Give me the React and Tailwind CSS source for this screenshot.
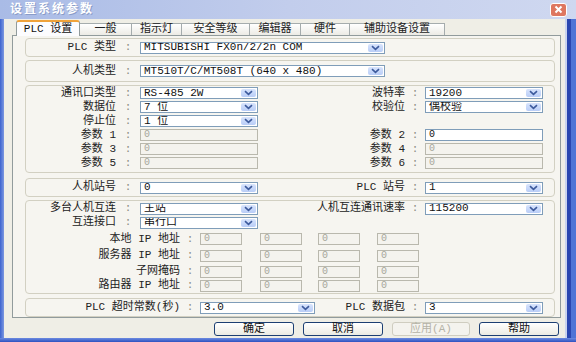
import React from "react"

const MONO = "font-['Liberation_Mono','Noto_Sans_CJK_SC',monospace]"

function Chevron() {
  return (
    <svg width="9" height="6" viewBox="0 0 9 6">
      <path d="M1 1.2 L4.5 4.4 L8 1.2" fill="none" stroke="#3d5a9c" strokeWidth="1.6" />
    </svg>
  )
}

function Select({ value, w }) {
  return (
    <div className={`flex h-[12px] items-stretch border border-[#7f9db9] bg-white ${w}`}>
      <div className="flex flex-1 items-center overflow-hidden whitespace-pre pl-[3px] text-[11px] leading-none text-[#111]">
        {value}
      </div>
      <div className="m-[1px] flex w-[15px] items-center justify-center rounded-[2px] bg-gradient-to-b from-[#d8e4fc] to-[#b9cdf7]">
        <Chevron />
      </div>
    </div>
  )
}

function Input({ value = "0", w, disabled = true }) {
  return (
    <div
      className={`flex h-[12px] items-center pl-[3px] text-[10px] leading-none ${w} ${
        disabled
          ? "border border-[#b9b8ad] bg-[#f4f3ee] text-[#a7a79c]"
          : "border border-[#7f9db9] bg-white text-[#111]"
      }`}
    >
      {value}
    </div>
  )
}

function Label({ text, w }) {
  return <div className={`whitespace-pre text-right text-[11px] leading-none text-[#222] ${w}`}>{text}</div>
}

function Colon({ w }) {
  return <div className={`text-center text-[11px] leading-none text-[#8a8a80] ${w}`}>:</div>
}

function Group({ className, children }) {
  return <div className={`mr-[5px] ml-[12px] rounded-[4px] border border-[#d2d0c2] ${className}`}>{children}</div>
}

// left column: label ends ~116, colon centred 128, control at 140
function LeftField({ label, children }) {
  return (
    <>
      <Label text={label} w="w-[90px]" />
      <Colon w="w-[24px]" />
      {children}
    </>
  )
}

function RightField({ label, children, w = "w-[147px]" }) {
  return (
    <>
      <Label text={label} w={w} />
      <Colon w="w-[20px]" />
      {children}
    </>
  )
}

function IpRow({ label, h }) {
  return (
    <div className={`flex items-center ${h}`}>
      <Label text={label} w="w-[154px]" />
      <Colon w="w-[20px]" />
      <Input w="w-[42px]" />
      <Input w="w-[42px] ml-[18px]" />
      <Input w="w-[42px] ml-[16px]" />
      <Input w="w-[42px] ml-[17px]" />
    </div>
  )
}

const tabs = [
  { name: "一般", w: "w-[52px]" },
  { name: "指示灯", w: "w-[50px]" },
  { name: "安全等级", w: "w-[68px]" },
  { name: "编辑器", w: "w-[51px]" },
  { name: "硬件", w: "w-[49px]" },
  { name: "辅助设备设置", w: "w-[95px]" },
]

function Button({ children, w, disabled }) {
  return (
    <div
      className={`flex h-[14px] items-center justify-center rounded-[3px] text-[11px] leading-none ${w} ${
        disabled
          ? "border border-[#cfcdc0] bg-[#f4f3ee] text-[#b4b2a6]"
          : "border border-[#1c3f73] bg-gradient-to-b from-white to-[#ecebe3] text-[#111]"
      }`}
    >
      {children}
    </div>
  )
}

export default function App() {
  return (
    <div className={`flex h-[342px] w-[576px] flex-col overflow-hidden bg-[#5b7ed8] ${MONO}`}>
      {/* title bar */}
      <div className="flex h-[19px] items-center bg-gradient-to-r from-[#a9bbe6] via-[#c2cdec] to-[#cfd8f0] pl-[10px] pr-[9px]">
        <div className="flex-1 text-[12px] font-bold tracking-[2px] text-white [text-shadow:1px_1px_0_#8a9cc8]">
          设置系统参数
        </div>
        <div className="flex h-[14px] w-[17px] items-center justify-center rounded-[3px] border border-white bg-[#de7760]">
          <svg width="9" height="9" viewBox="0 0 9 9">
            <path d="M1.5 1.5 L7.5 7.5 M7.5 1.5 L1.5 7.5" stroke="white" strokeWidth="2" />
          </svg>
        </div>
      </div>

      <div className="flex min-h-0 flex-1">
        <div className="w-[4px] bg-gradient-to-r from-[#3d63cf] to-[#7d98e0]" />
        <div className="flex flex-1 flex-col bg-[#efeee6] pt-[2px] pr-[4px] pl-[8px]">
          {/* tabs */}
          <div className="relative z-10 flex h-[14px] items-end pl-[4px] text-[11px] leading-none">
            <div className="mb-[-1px] flex h-[16px] w-[64px] items-center justify-center rounded-t-[3px] border-x border-t-2 border-x-[#919b9c] border-t-[#f0a33a] bg-[#fcfcfe] text-[#111]">
              PLC 设置
            </div>
            {tabs.map((t) => (
              <div
                key={t.name}
                className={`flex h-[12px] items-center justify-center border-t border-r border-[#a5acad] bg-gradient-to-b from-white to-[#ecebe5] text-[#222] ${t.w}`}
              >
                {t.name}
              </div>
            ))}
          </div>

          {/* panel */}
          <div className="flex h-[283px] flex-col border border-[#919b9c] bg-[#f6f5f0] pt-[2px]">
            <Group className="flex h-[19px] items-center">
              <LeftField label="PLC 类型">
                <Select value="MITSUBISHI FX0n/2/2n COM" w="w-[245px]" />
              </LeftField>
            </Group>

            <Group className="mt-[3px] flex h-[22px] items-center">
              <LeftField label="人机类型">
                <Select value="MT510T/C/MT508T (640 x 480)" w="w-[245px]" />
              </LeftField>
            </Group>

            <Group className="mt-[3px] flex h-[88px] flex-col pt-[0px]">
              <div className="flex h-[14px] items-center">
                <LeftField label="通讯口类型">
                  <Select value="RS-485 2W" w="w-[118px]" />
                </LeftField>
                <RightField label="波特率">
                  <Select value="19200" w="w-[118px]" />
                </RightField>
              </div>
              <div className="flex h-[14px] items-center">
                <LeftField label="数据位">
                  <Select value="7 位" w="w-[118px]" />
                </LeftField>
                <RightField label="校验位">
                  <Select value="偶校验" w="w-[118px]" />
                </RightField>
              </div>
              <div className="flex h-[14px] items-center">
                <LeftField label="停止位">
                  <Select value="1 位" w="w-[118px]" />
                </LeftField>
              </div>
              <div className="flex h-[14px] items-center">
                <LeftField label="参数 1">
                  <Input w="w-[118px]" />
                </LeftField>
                <RightField label="参数 2">
                  <Input w="w-[118px]" disabled={false} />
                </RightField>
              </div>
              <div className="flex h-[14px] items-center">
                <LeftField label="参数 3">
                  <Input w="w-[118px]" />
                </LeftField>
                <RightField label="参数 4">
                  <Input w="w-[118px]" />
                </RightField>
              </div>
              <div className="flex h-[14px] items-center">
                <LeftField label="参数 5">
                  <Input w="w-[118px]" />
                </LeftField>
                <RightField label="参数 6">
                  <Input w="w-[118px]" />
                </RightField>
              </div>
            </Group>

            <Group className="mt-[5px] flex h-[19px] items-center">
              <LeftField label="人机站号">
                <Select value="0" w="w-[118px]" />
              </LeftField>
              <RightField label="PLC 站号">
                <Select value="1" w="w-[118px]" />
              </RightField>
            </Group>

            <Group className="mt-[3px] flex h-[94px] flex-col">
              <div className="flex h-[15px] items-center">
                <LeftField label="多台人机互连">
                  <Select value="主站" w="w-[118px]" />
                </LeftField>
                <RightField label="人机互连通讯速率">
                  <Select value="115200" w="w-[118px]" />
                </RightField>
              </div>
              <div className="flex h-[13px] items-center">
                <LeftField label="互连接口">
                  <Select value="串行口" w="w-[118px]" />
                </LeftField>
              </div>
              <div className="h-[2px]" />
              <IpRow label="本地 IP 地址" h="h-[16px]" />
              <IpRow label="服务器 IP 地址" h="h-[17px]" />
              <IpRow label="子网掩码" h="h-[15px]" />
              <IpRow label="路由器 IP 地址" h="h-[13px]" />
            </Group>

            <Group className="mt-[4px] flex h-[19px] items-center">
              <Label text="PLC 超时常数(秒)" w="w-[154px]" />
              <Colon w="w-[20px]" />
              <Select value="3.0" w="w-[115px]" />
              <RightField label="PLC 数据包" w="w-[90px]">
                <Select value="3" w="w-[118px]" />
              </RightField>
            </Group>
          </div>

          {/* buttons */}
          <div className="mt-[4px] flex justify-end gap-[9px] pr-[2px]">
            <Button w="w-[80px]">确定</Button>
            <Button w="w-[80px]">取消</Button>
            <Button w="w-[78px]" disabled>
              应用(A)
            </Button>
            <Button w="w-[80px]">帮助</Button>
          </div>
        </div>
        <div className="flex w-[11px]">
          <div className="w-[2px] bg-[#c9d3ee]" />
          <div className="w-[4px] bg-[#2a46b0]" />
          <div className="flex-1 bg-[#4f74d6]" />
        </div>
      </div>
      <div className="h-[4px] bg-gradient-to-b from-[#6d8be0] to-[#2f50c0]" />
    </div>
  )
}
